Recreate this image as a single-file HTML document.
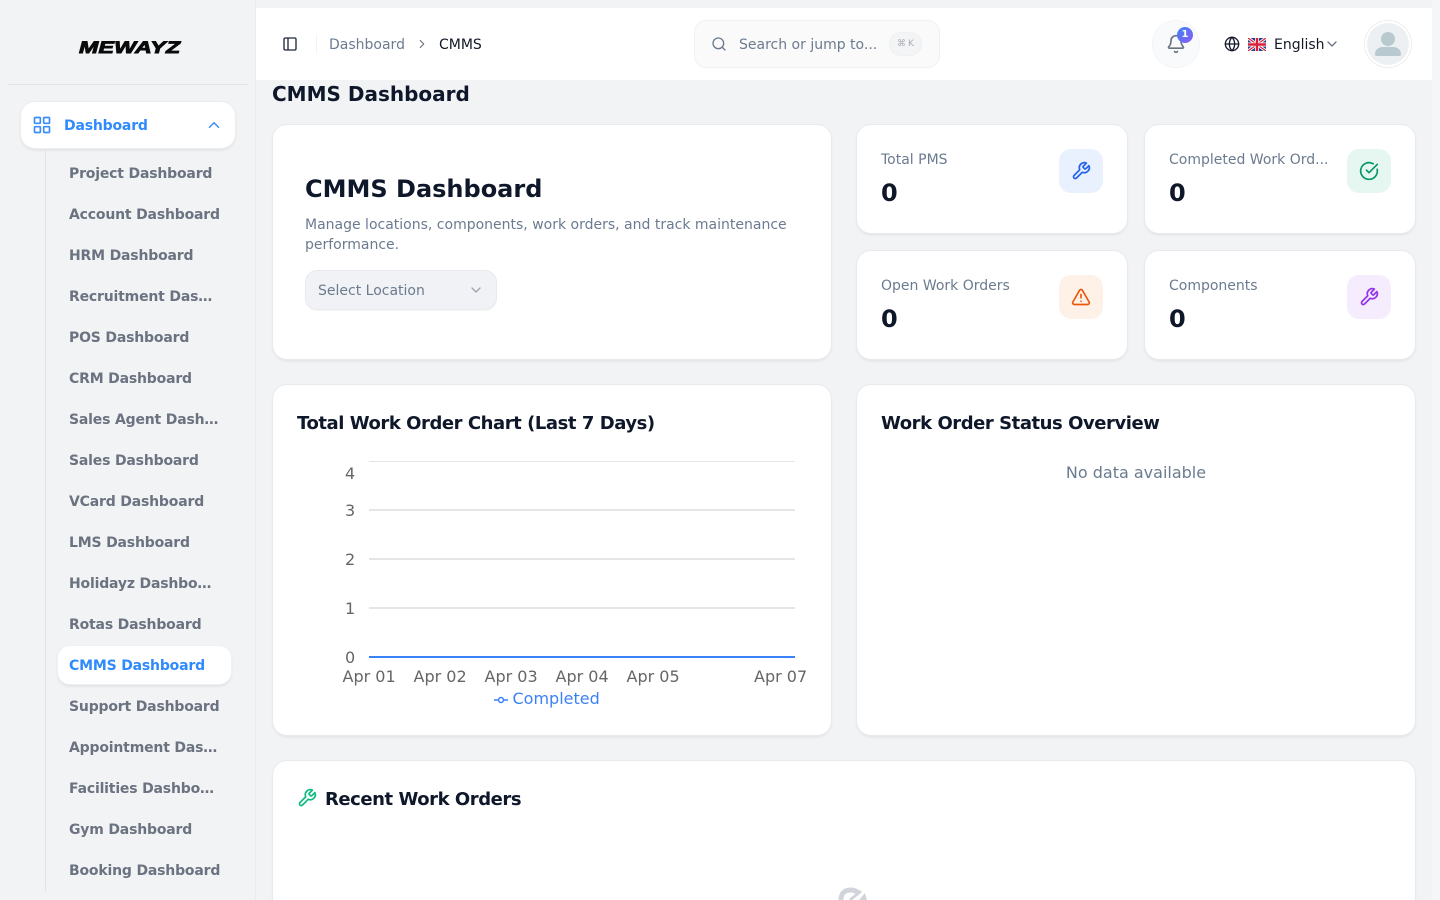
<!DOCTYPE html>
<html lang="en"><head><meta charset="utf-8"><title>CMMS Dashboard</title>
<style>
*{box-sizing:border-box}
html,body{margin:0;padding:0;width:1440px;height:900px;overflow:hidden;background:#f2f3f5;font-family:"DejaVu Sans","Liberation Sans",sans-serif;color:#111827}
#root{position:relative;width:1440px;height:900px;overflow:hidden}
.a{position:absolute}
.t{position:absolute;white-space:nowrap;line-height:20px}
.h{letter-spacing:-.45px}
.card{position:absolute;background:#fff;border-radius:14px;box-shadow:0 0 0 1px #e8eaee,0 2px 3px rgba(0,0,0,.08)}
.nav{position:absolute;left:69px;font-size:14px;font-weight:700;color:#6b7280;line-height:20px;white-space:nowrap;letter-spacing:-.18px}
.lab{position:absolute;font-size:14px;color:#6b7b8f;line-height:20px;white-space:nowrap}
.num{position:absolute;font-size:24px;font-weight:700;line-height:32px;color:#0f172a}
.ib{position:absolute;width:44px;height:44px;border-radius:12px;display:flex;align-items:center;justify-content:center}
svg{display:block}
.tick{position:absolute;font-size:16px;color:#666;line-height:20px;white-space:nowrap}
.grid{position:absolute;left:369px;width:426px;height:2px;background:#e5e5e5}
</style></head><body><div id="root">

<div class="a" style="left:255px;top:0;width:1px;height:900px;background:#e9ebef"></div>
<div class="a" style="left:1432px;top:0;width:8px;height:900px;background:#f5f6f7"></div>

<div class="t" style="left:79px;top:36px;font:italic 900 17px/24px 'Liberation Sans',sans-serif;letter-spacing:.2px;color:#0a0a0a;-webkit-text-stroke:.9px #0a0a0a;transform:scaleX(1.36);transform-origin:left">MEWAYZ</div>
<div class="a" style="left:8px;top:84px;width:240px;height:1px;background:#e3e5e9"></div>

<div class="a" style="left:21px;top:102px;width:214px;height:46px;background:#fff;border-radius:14px;box-shadow:0 0 0 1px #eceef1,0 2px 3px rgba(0,0,0,.1)"></div>
<svg class="a" style="left:32px;top:115px" width="20" height="20" viewBox="0 0 24 24" fill="none" stroke="#3b8df8" stroke-width="2"><rect x="3" y="3" width="7" height="7" rx="1"/><rect x="14" y="3" width="7" height="7" rx="1"/><rect x="14" y="14" width="7" height="7" rx="1"/><rect x="3" y="14" width="7" height="7" rx="1"/></svg>
<div class="t" style="left:64px;top:116px;font-size:14px;font-weight:700;color:#2f8bfd;letter-spacing:-.18px">Dashboard</div>
<svg class="a" style="left:205px;top:116px" width="18" height="18" viewBox="0 0 24 24" fill="none" stroke="#3b8df8" stroke-width="2" stroke-linecap="round" stroke-linejoin="round"><path d="m18 15-6-6-6 6"/></svg>

<div class="a" style="left:45px;top:149px;width:1px;height:743px;background:#e1e3e7"></div>
<div class="a" style="left:58px;top:646px;width:173px;height:38px;background:#fff;border-radius:12px;box-shadow:0 0 0 1px #eef0f2,0 2px 3px rgba(0,0,0,.1)"></div>

<div class="nav" style="top:164px">Project Dashboard</div>
<div class="nav" style="top:205px">Account Dashboard</div>
<div class="nav" style="top:246px">HRM Dashboard</div>
<div class="nav" style="top:287px">Recruitment Das…</div>
<div class="nav" style="top:328px">POS Dashboard</div>
<div class="nav" style="top:369px">CRM Dashboard</div>
<div class="nav" style="top:410px">Sales Agent Dash…</div>
<div class="nav" style="top:451px">Sales Dashboard</div>
<div class="nav" style="top:492px">VCard Dashboard</div>
<div class="nav" style="top:533px">LMS Dashboard</div>
<div class="nav" style="top:574px">Holidayz Dashbo…</div>
<div class="nav" style="top:615px">Rotas Dashboard</div>
<div class="nav" style="top:656px;color:#2f8bfd">CMMS Dashboard</div>
<div class="nav" style="top:697px">Support Dashboard</div>
<div class="nav" style="top:738px">Appointment Das…</div>
<div class="nav" style="top:779px">Facilities Dashbo…</div>
<div class="nav" style="top:820px">Gym Dashboard</div>
<div class="nav" style="top:861px">Booking Dashboard</div>

<!-- header -->
<div class="a" style="left:256px;top:8px;width:1176px;height:72px;background:#fff"></div>
<svg class="a" style="left:282px;top:36px" width="16" height="16" viewBox="0 0 24 24" fill="none" stroke="#1f2937" stroke-width="2" stroke-linecap="round" stroke-linejoin="round"><rect x="3" y="3" width="18" height="18" rx="2"/><path d="M9 3v18"/></svg>
<div class="a" style="left:316px;top:34px;width:1px;height:20px;background:#f3f4f6"></div>
<div class="t" style="left:329px;top:35px;font-size:14px;color:#6b7b8f">Dashboard</div>
<svg class="a" style="left:415px;top:37px" width="14" height="14" viewBox="0 0 24 24" fill="none" stroke="#6b7280" stroke-width="2" stroke-linecap="round" stroke-linejoin="round"><path d="m9 18 6-6-6-6"/></svg>
<div class="t" style="left:439px;top:35px;font-size:14px;color:#111827">CMMS</div>

<div class="a" style="left:694px;top:20px;width:246px;height:48px;background:#fafafb;border:1px solid #f0f1f3;border-radius:12px"></div>
<svg class="a" style="left:711px;top:36px" width="16" height="16" viewBox="0 0 24 24" fill="none" stroke="#6b7b8f" stroke-width="2" stroke-linecap="round" stroke-linejoin="round"><path d="m21 21-4.34-4.34"/><circle cx="11" cy="11" r="8"/></svg>
<div class="t" style="left:739px;top:35px;font-size:14px;color:#6b7b8f">Search or jump to...</div>
<div class="a" style="left:889px;top:32px;width:33px;height:24px;border-radius:12px;background:#f3f4f6;border:1px solid #eef0f2"></div>
<div class="t" style="left:897px;top:34px;font-size:9px;letter-spacing:2px;color:#a8adb6">⌘K</div>

<div class="a" style="left:1152px;top:20px;width:48px;height:48px;border-radius:50%;background:#f9fafb;border:1px solid #f3f4f6"></div>
<svg class="a" style="left:1166px;top:34px" width="20" height="20" viewBox="0 0 24 24" fill="none" stroke="#6b7280" stroke-width="2" stroke-linecap="round" stroke-linejoin="round"><path d="M10.268 21a2 2 0 0 0 3.464 0"/><path d="M3.262 15.326A1 1 0 0 0 4 17h16a1 1 0 0 0 .74-1.673C19.41 13.956 18 12.499 18 8A6 6 0 0 0 6 8c0 4.499-1.411 5.956-2.738 7.326"/></svg>
<div class="a" style="left:1177px;top:27px;width:16px;height:16px;border-radius:50%;background:linear-gradient(135deg,#3b82f6,#8b5cf6);color:#fff;font-size:10px;font-weight:700;line-height:16px;text-align:center">1</div>

<svg class="a" style="left:1224px;top:36px" width="16" height="16" viewBox="0 0 24 24" fill="none" stroke="#111827" stroke-width="2" stroke-linecap="round" stroke-linejoin="round"><circle cx="12" cy="12" r="10"/><path d="M12 2a14.5 14.5 0 0 0 0 20 14.5 14.5 0 0 0 0-20"/><path d="M2 12h20"/></svg>
<svg class="a" style="left:1248px;top:38px" width="18" height="13" viewBox="0 0 18 13"><rect width="18" height="13" rx="2" fill="#27408b"/><path d="M0 0l18 13M18 0L0 13" stroke="#fff" stroke-width="3"/><path d="M0 0l18 13M18 0L0 13" stroke="#d8203a" stroke-width="1.200"/><path d="M9 0v13M0 6.500h18" stroke="#fff" stroke-width="4"/><path d="M9 0v13M0 6.500h18" stroke="#d8203a" stroke-width="2.500"/></svg>
<div class="t" style="left:1274px;top:35px;font-size:14px;color:#111827">English</div>
<svg class="a" style="left:1324px;top:36px" width="16" height="16" viewBox="0 0 24 24" fill="none" stroke="#6b7280" stroke-width="2" stroke-linecap="round" stroke-linejoin="round"><path d="m6 9 6 6 6-6"/></svg>

<div class="a" style="left:1364px;top:20px;width:48px;height:48px;border-radius:50%;background:#fff;border:1px solid #eceef0"></div>
<div class="a" style="left:1367px;top:23px;width:42px;height:42px;border-radius:50%;background:#edf0f2;overflow:hidden">
<div class="a" style="left:14px;top:9px;width:14px;height:14px;border-radius:50%;background:#b8c9d0"></div>
<div class="a" style="left:8px;top:24px;width:26px;height:9px;border-radius:13px 13px 3px 3px;background:#b8c9d0"></div>
</div>

<!-- title -->
<div class="t" style="left:272px;top:82px;font-size:20px;font-weight:700;line-height:24px;color:#0f172a">CMMS Dashboard</div>

<!-- hero -->
<div class="card" style="left:273px;top:125px;width:558px;height:234px"></div>
<div class="t" style="left:305px;top:173px;font-size:24px;font-weight:700;line-height:32px;color:#0f172a">CMMS Dashboard</div>
<div class="t" style="left:305px;top:215px;font-size:14px;color:#6b7b8f">Manage locations, components, work orders, and track maintenance</div>
<div class="t" style="left:305px;top:235px;font-size:14px;color:#6b7b8f">performance.</div>
<div class="a" style="left:305px;top:270px;width:192px;height:40px;border-radius:12px;background:#f1f2f5;border:1px solid #e8eaee;box-shadow:0 1px 1px rgba(0,0,0,.04)"></div>
<div class="t" style="left:318px;top:281px;font-size:14px;color:#6b7b8f">Select Location</div>
<svg class="a" style="left:468px;top:282px" width="16" height="16" viewBox="0 0 24 24" fill="none" stroke="#9ca3af" stroke-width="2" stroke-linecap="round" stroke-linejoin="round"><path d="m6 9 6 6 6-6"/></svg>

<!-- stat cards -->
<div class="card" style="left:857px;top:125px;width:270px;height:108px"></div>
<div class="lab" style="left:881px;top:150px">Total PMS</div>
<div class="num" style="left:881px;top:177px">0</div>
<div class="ib" style="left:1059px;top:149px;background:#e9f0fe"><svg width="20" height="20" viewBox="0 0 24 24" fill="none" stroke="#2563eb" stroke-width="2" stroke-linecap="round" stroke-linejoin="round"><path d="M14.700 6.300a1 1 0 0 0 0 1.400l1.600 1.600a1 1 0 0 0 1.400 0l3.770-3.770a6 6 0 0 1-7.940 7.940l-6.910 6.910a2.120 2.120 0 0 1-3-3l6.910-6.910a6 6 0 0 1 7.940-7.940l-3.760 3.760z"/></svg></div>

<div class="card" style="left:1145px;top:125px;width:270px;height:108px"></div>
<div class="lab" style="left:1169px;top:150px">Completed Work Ord...</div>
<div class="num" style="left:1169px;top:177px">0</div>
<div class="ib" style="left:1347px;top:149px;background:#e6f6f0"><svg width="20" height="20" viewBox="0 0 24 24" fill="none" stroke="#059669" stroke-width="2" stroke-linecap="round" stroke-linejoin="round"><path d="M21.801 10A10 10 0 1 1 17 3.335"/><path d="m9 11 3 3L22 4"/></svg></div>

<div class="card" style="left:857px;top:251px;width:270px;height:108px"></div>
<div class="lab" style="left:881px;top:276px">Open Work Orders</div>
<div class="num" style="left:881px;top:303px">0</div>
<div class="ib" style="left:1059px;top:275px;background:#fdf1e8"><svg width="20" height="20" viewBox="0 0 24 24" fill="none" stroke="#ea580c" stroke-width="2" stroke-linecap="round" stroke-linejoin="round"><path d="m21.730 18-8-14a2 2 0 0 0-3.480 0l-8 14A2 2 0 0 0 4 21h16a2 2 0 0 0 1.730-3"/><path d="M12 9v4"/><path d="M12 17h.01"/></svg></div>

<div class="card" style="left:1145px;top:251px;width:270px;height:108px"></div>
<div class="lab" style="left:1169px;top:276px">Components</div>
<div class="num" style="left:1169px;top:303px">0</div>
<div class="ib" style="left:1347px;top:275px;background:#f5edfd"><svg width="20" height="20" viewBox="0 0 24 24" fill="none" stroke="#9333ea" stroke-width="2" stroke-linecap="round" stroke-linejoin="round"><path d="M14.700 6.300a1 1 0 0 0 0 1.400l1.600 1.600a1 1 0 0 0 1.400 0l3.770-3.770a6 6 0 0 1-7.940 7.940l-6.910 6.910a2.120 2.120 0 0 1-3-3l6.910-6.910a6 6 0 0 1 7.940-7.940l-3.760 3.760z"/></svg></div>

<!-- chart card -->
<div class="card" style="left:273px;top:385px;width:558px;height:350px"></div>
<div class="t h" style="left:297px;top:411px;font-size:18px;font-weight:700;line-height:26px;color:#0f172a">Total Work Order Chart (Last 7 Days)</div>
<div class="a" style="left:369px;top:461px;width:426px;height:1px;background:#e5e5e5"></div>
<div class="grid" style="top:509px"></div>
<div class="grid" style="top:558px"></div>
<div class="grid" style="top:607px"></div>
<div class="a" style="left:369px;top:656px;width:426px;height:2px;background:#3b82f6"></div>
<div class="tick" style="left:345px;top:464px">4</div>
<div class="tick" style="left:345px;top:501px">3</div>
<div class="tick" style="left:345px;top:550px">2</div>
<div class="tick" style="left:345px;top:599px">1</div>
<div class="tick" style="left:345px;top:648px">0</div>
<div class="tick" style="left:342.500px;top:667px">Apr 01</div>
<div class="tick" style="left:413.500px;top:667px">Apr 02</div>
<div class="tick" style="left:484.500px;top:667px">Apr 03</div>
<div class="tick" style="left:555.500px;top:667px">Apr 04</div>
<div class="tick" style="left:626.500px;top:667px">Apr 05</div>
<div class="tick" style="left:754px;top:667px">Apr 07</div>
<svg class="a" style="left:494px;top:695px" width="14" height="10" viewBox="0 0 14 10" fill="none" stroke="#3b82f6" stroke-width="1.500"><path d="M0 5h4M10 5h4"/><circle cx="7" cy="5" r="2.500"/></svg>
<div class="tick" style="left:512.500px;top:689px;color:#3b82f6">Completed</div>

<!-- status card -->
<div class="card" style="left:857px;top:385px;width:558px;height:350px"></div>
<div class="t h" style="left:881px;top:411px;font-size:18px;font-weight:700;line-height:26px;color:#0f172a">Work Order Status Overview</div>
<div class="t" style="left:857px;width:558px;text-align:center;top:463px;font-size:16px;line-height:20px;color:#6b7b8f">No data available</div>

<!-- recent -->
<div class="card" style="left:273px;top:761px;width:1142px;height:139px;border-radius:14px 14px 0 0"></div>
<svg class="a" style="left:297px;top:788px" width="20" height="20" viewBox="0 0 24 24" fill="none" stroke="#10b981" stroke-width="2" stroke-linecap="round" stroke-linejoin="round"><path d="M14.700 6.300a1 1 0 0 0 0 1.400l1.600 1.600a1 1 0 0 0 1.400 0l3.770-3.770a6 6 0 0 1-7.940 7.940l-6.910 6.910a2.120 2.120 0 0 1-3-3l6.910-6.910a6 6 0 0 1 7.940-7.940l-3.760 3.760z"/></svg>
<div class="t h" style="left:325px;top:787px;font-size:18px;font-weight:700;line-height:26px;color:#0f172a">Recent Work Orders</div>
<svg class="a" style="left:832px;top:882px" width="40" height="18" viewBox="0 0 40 18" fill="none"><path d="M9 18Q9 8 19 8Q24 8 27 12" stroke="#d1d5db" stroke-width="5"/><path d="M18 18L29 9" stroke="#d1d5db" stroke-width="3"/><path d="M27 18L33 11L35 18Z" fill="#d1d5db"/></svg>

</div></body></html>
